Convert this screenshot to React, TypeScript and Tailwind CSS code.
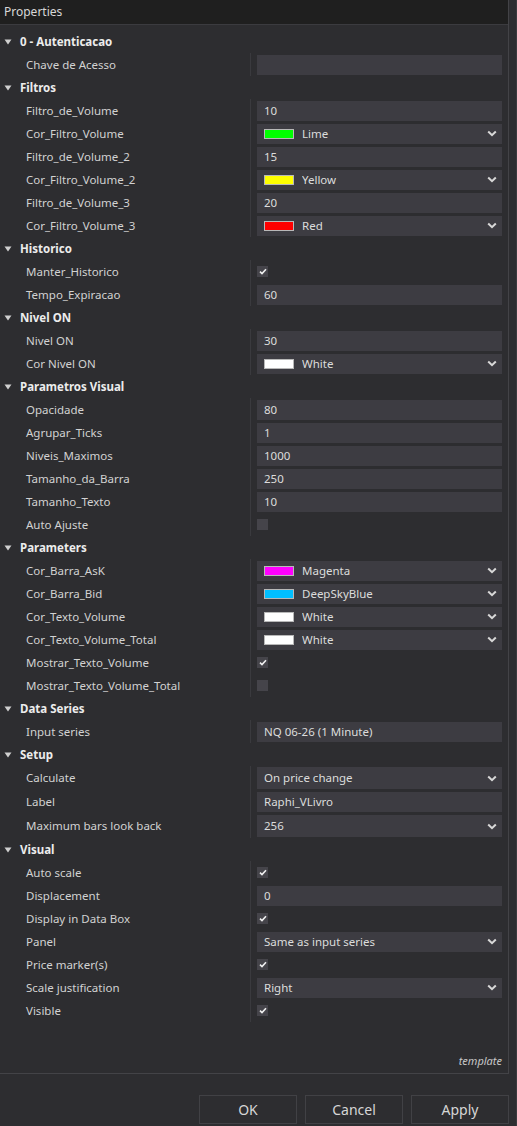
import React from "react";

type Value =
  | { kind: "text"; value: string }
  | { kind: "select"; value: string }
  | { kind: "color"; value: string; swatch: string }
  | { kind: "check"; checked: boolean };

type Item = { label: string; v: Value; tall?: boolean };
type Group = { title: string; items: Item[] };

const text = (value: string): Value => ({ kind: "text", value });
const select = (value: string): Value => ({ kind: "select", value });
const color = (value: string, swatch: string): Value => ({ kind: "color", value, swatch });
const check = (checked: boolean): Value => ({ kind: "check", checked });

const groups: Group[] = [
  { title: "0 - Autenticacao", items: [{ label: "Chave de Acesso", v: text("") }] },
  {
    title: "Filtros",
    items: [
      { label: "Filtro_de_Volume", v: text("10") },
      { label: "Cor_Filtro_Volume", v: color("Lime", "#00ff00") },
      { label: "Filtro_de_Volume_2", v: text("15") },
      { label: "Cor_Filtro_Volume_2", v: color("Yellow", "#ffff00") },
      { label: "Filtro_de_Volume_3", v: text("20") },
      { label: "Cor_Filtro_Volume_3", v: color("Red", "#ff0000") },
    ],
  },
  {
    title: "Historico",
    items: [
      { label: "Manter_Historico", v: check(true) },
      { label: "Tempo_Expiracao", v: text("60") },
    ],
  },
  {
    title: "Nivel ON",
    items: [
      { label: "Nivel ON", v: text("30") },
      { label: "Cor Nivel ON", v: color("White", "#ffffff") },
    ],
  },
  {
    title: "Parametros Visual",
    items: [
      { label: "Opacidade", v: text("80") },
      { label: "Agrupar_Ticks", v: text("1") },
      { label: "Niveis_Maximos", v: text("1000") },
      { label: "Tamanho_da_Barra", v: text("250") },
      { label: "Tamanho_Texto", v: text("10") },
      { label: "Auto Ajuste", v: check(false) },
    ],
  },
  {
    title: "Parameters",
    items: [
      { label: "Cor_Barra_AsK", v: color("Magenta", "#ff00ff") },
      { label: "Cor_Barra_Bid", v: color("DeepSkyBlue", "#00bfff") },
      { label: "Cor_Texto_Volume", v: color("White", "#ffffff") },
      { label: "Cor_Texto_Volume_Total", v: color("White", "#ffffff") },
      { label: "Mostrar_Texto_Volume", v: check(true) },
      { label: "Mostrar_Texto_Volume_Total", v: check(false) },
    ],
  },
  { title: "Data Series", items: [{ label: "Input series", v: text("NQ 06-26 (1 Minute)") }] },
  {
    title: "Setup",
    items: [
      { label: "Calculate", v: select("On price change"), tall: true },
      { label: "Label", v: text("Raphi_VLivro"), tall: true },
      { label: "Maximum bars look back", v: select("256"), tall: true },
    ],
  },
  {
    title: "Visual",
    items: [
      { label: "Auto scale", v: check(true) },
      { label: "Displacement", v: text("0") },
      { label: "Display in Data Box", v: check(true) },
      { label: "Panel", v: select("Same as input series") },
      { label: "Price marker(s)", v: check(true) },
      { label: "Scale justification", v: select("Right") },
      { label: "Visible", v: check(true) },
    ],
  },
];

const Chevron = () => (
  <svg width="10" height="7" viewBox="0 0 10 7" className="shrink-0">
    <path d="M1.2 1.5 L5 5.2 L8.8 1.5" fill="none" stroke="#d8d8d8" strokeWidth="2" />
  </svg>
);

const ValueCell = ({ v, tall }: { v: Value; tall?: boolean }) => {
  if (v.kind === "check") {
    return (
      <div className="w-[11px] h-[11px] bg-[#45444a] flex items-center justify-center">
        {v.checked && (
          <svg width="8" height="7" viewBox="0 0 8 7">
            <path d="M1 3.6 L3 5.5 L7 1.2" fill="none" stroke="#f0f0f0" strokeWidth="1.6" />
          </svg>
        )}
      </div>
    );
  }
  const h = tall && v.kind === "select" ? "h-[22px]" : "h-[20px]";
  return (
    <div className={`w-full ${h} bg-[#3d3c42] flex items-center pl-[7px] pr-[5px] text-[#dcdcdc]`}>
      {v.kind === "color" && (
        <div className="w-[30px] h-[10px] border border-[#b8b8b8] mr-[8px] shrink-0" style={{ backgroundColor: v.swatch }} />
      )}
      <span className="flex-1 truncate">{v.value}</span>
      {(v.kind === "select" || v.kind === "color") && <Chevron />}
    </div>
  );
};

const Caret = () => (
  <svg width="8" height="6" viewBox="0 0 8 6" className="shrink-0">
    <path d="M0.5 0.5 L7.5 0.5 L4 5.5 Z" fill="#cfcfcf" />
  </svg>
);

export default function App() {
  return (
    <div
      className="w-[517px] h-[1126px] bg-[#2d2d30] flex flex-col overflow-hidden text-[11.5px] text-[#d4d4d4]"
      style={{ fontFamily: '"Noto Sans", "Open Sans", sans-serif' }}
    >
      <div className="flex flex-1 min-h-0">
        {/* properties panel */}
        <div className="w-[509px] flex flex-col border-r border-[#434347] border-b">
          <div className="h-[25px] bg-[#1f1f1f] border-b border-[#3b3b3f] flex items-center pl-[4px] text-[12px] text-[#d8d8d8]">
            Properties
          </div>
          <div className="pt-[5px] flex flex-col">
            {groups.map((g) => (
              <div key={g.title} className="flex flex-col">
                <div className="h-[23px] flex items-center pl-[4px] gap-[8px] font-bold text-[#ececec]">
                  <Caret />
                  <span>{g.title}</span>
                </div>
                {g.items.map((it) => (
                  <div key={it.label} className={`${it.tall ? "h-[24px]" : "h-[23px]"} flex`}>
                    <div className="w-[251px] flex items-center pl-[26px] text-[#d2d2d2] border-r border-[#3a3a3e]">
                      {it.label}
                    </div>
                    <div className="flex-1 flex items-center pl-[6px] pr-[6px]">
                      <ValueCell v={it.v} tall={it.tall} />
                    </div>
                  </div>
                ))}
              </div>
            ))}
          </div>
          <div className="flex-1" />
          <div className="h-[26px] flex items-end pb-[4px] justify-end pr-[6px] italic text-[11px] text-[#c8c8c8]">
            template
          </div>
        </div>
        <div className="flex-1 border-r border-[#3a3a3e]" />
      </div>
      {/* buttons */}
      <div className="h-[52px] flex justify-end items-start pt-[21px] gap-[8px] pr-[7px] border-r border-[#3a3a3e]">
        {["OK", "Cancel", "Apply"].map((b) => (
          <div
            key={b}
            className="w-[98px] h-[29px] border border-[#414145] bg-[#2d2d30] flex items-center justify-center text-[14px] text-[#d6d6d6]"
          >
            {b}
          </div>
        ))}
      </div>
    </div>
  );
}
